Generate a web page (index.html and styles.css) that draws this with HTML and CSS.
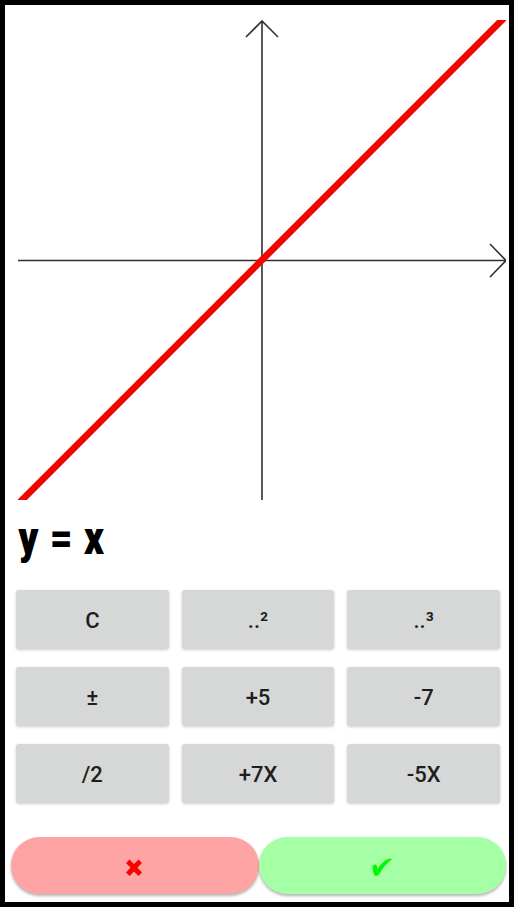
FILE: index.html
```html
<!DOCTYPE html>
<html lang="en">
<head>
<meta charset="utf-8">
<meta name="viewport" content="width=device-width, initial-scale=1">
<title>Function graph</title>
<link rel="stylesheet" href="styles.css">
</head>
<body>
<main class="screen">
  <svg class="graph" viewBox="0 0 488 480" role="img" aria-label="Graph of y = x">
    <g class="axis">
      <path d="M244 480V1M228 17L244 1L260 17"/>
      <path d="M0 240.500H487M472 224L488 240.500L472 257"/>
    </g>
    <path class="curve" d="M-6 490L494 -10"/>
  </svg>
  <h1 class="formula">y = x</h1>
  <div class="keypad">
    <button type="button" class="key">C</button>
    <button type="button" class="key">..²</button>
    <button type="button" class="key">..³</button>
    <button type="button" class="key">±</button>
    <button type="button" class="key">+5</button>
    <button type="button" class="key">-7</button>
    <button type="button" class="key">/2</button>
    <button type="button" class="key">+7X</button>
    <button type="button" class="key">-5X</button>
  </div>
  <div class="actions">
    <button type="button" class="action cancel" aria-label="Cancel">
      <svg class="icon" viewBox="0 0 24 24" aria-hidden="true"><path d="M3 7L6.500 3.500L11 8L15.500 3.500L19 7L14.500 11.500L19 16.500L15.500 20L11 15.500L6.500 20L3 16.500L7.500 11.500Z"/></svg>
    </button>
    <button type="button" class="action confirm" aria-label="Confirm">
      <svg class="icon" viewBox="0 0 24 24" aria-hidden="true"><path d="M2.500 10.500C2.800 8.800 6.300 7.800 6.700 9.500L7.300 13C10.500 8.500 14 4.500 17.500 3.200C19 2.700 21.500 2.700 22 3.300C16.500 7.200 12.500 12.500 9 18.200C8 20.200 4.700 20.500 4 18.500C3.300 16 2.500 13 2.500 10.500Z"/></svg>
    </button>
  </div>
</main>
</body>
</html>
```
FILE: styles.css
```css
* {
  box-sizing: border-box;
}

body {
  margin: 0;
  background: #fff;
  font-family: Roboto, "Liberation Sans", sans-serif;
}

.screen {
  display: flex;
  flex-direction: column;
  min-height: 100vh;
  padding: 15px 3px 8px 6px;
  border: 5px solid #000;
}

.graph {
  display: block;
  margin-left: 7px;
}

.axis {
  fill: none;
  stroke: #303030;
  stroke-width: 1.6;
}

.curve {
  fill: none;
  stroke: #f20505;
  stroke-width: 6.8;
}

.formula {
  margin: 10px 0 0 7px;
  font-family: "Roboto Condensed", "Liberation Sans Narrow", Roboto, sans-serif;
  font-size: 46px;
  line-height: 56px;
  font-weight: 800;
  color: #000;
}

.keypad {
  display: grid;
  grid-template-columns: repeat(3, 1fr);
  gap: 18px 13px;
  margin: 24px 6px 0 5px;
}

.key {
  height: 59px;
  padding: 2px 0 0;
  border: 0;
  border-radius: 3px;
  background: #d6d8d7;
  box-shadow: 0 1px 3px rgba(0, 0, 0, 0.2);
  color: #1d1f1e;
  font: 500 22px/32px Roboto, "Liberation Sans", sans-serif;
}

.actions {
  display: grid;
  grid-template-columns: 1fr 1fr;
  margin-top: auto;
}

.action {
  display: flex;
  align-items: center;
  justify-content: center;
  height: 57px;
  padding: 4px 0 0;
  border: 0;
  border-radius: 29px;
  box-shadow: 0 2px 3px rgba(0, 0, 0, 0.3);
}

.cancel {
  background: #ffa4a4;
  color: #f00;
}

.confirm {
  background: #a5ffa5;
  color: #00f800;
}

.icon {
  width: 24px;
  height: 24px;
  fill: currentColor;
}
```
